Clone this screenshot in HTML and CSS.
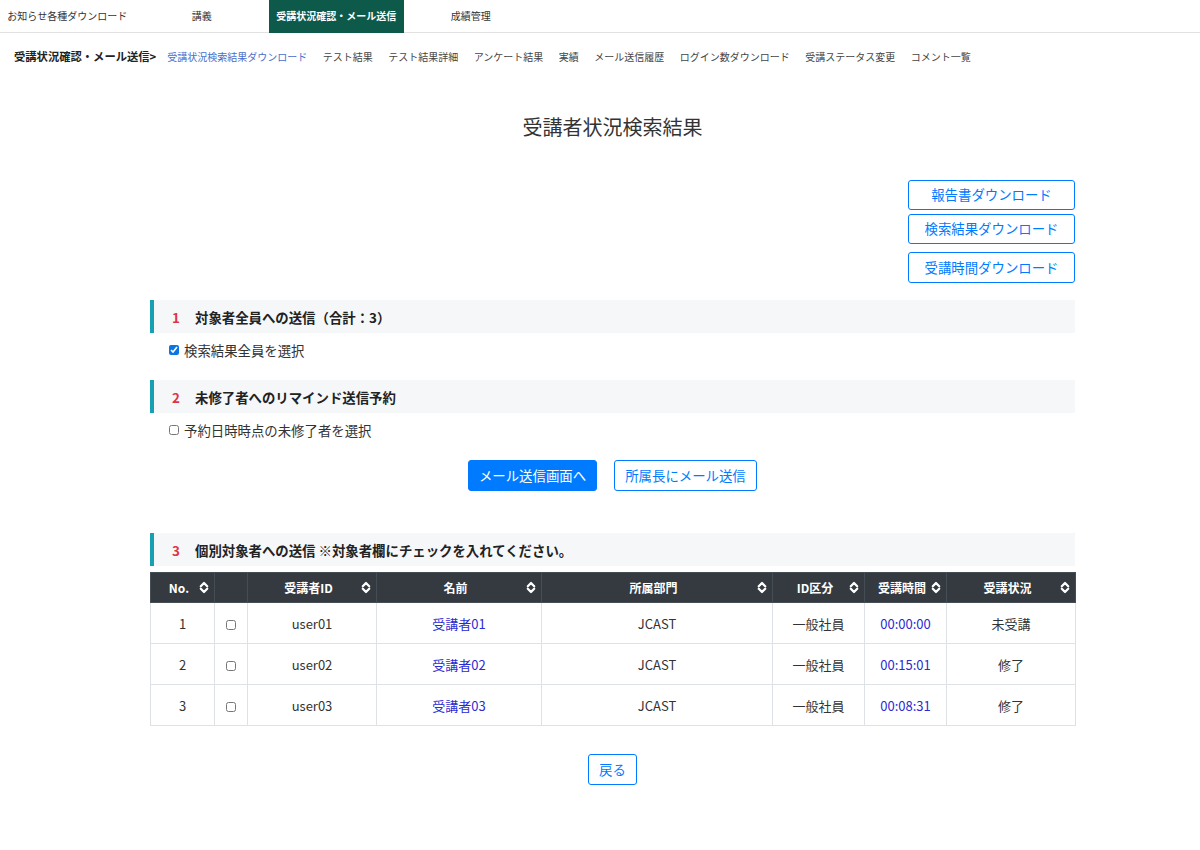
FILE: index.html
```html
<!DOCTYPE html>
<html lang="ja">
<head>
<meta charset="utf-8">
<title>受講者状況検索結果</title>
<link rel="stylesheet" href="styles.css">
</head>
<body>
<nav class="topnav">
  <a href="#">お知らせ各種ダウンロード</a>
  <a href="#">講義</a>
  <a href="#" class="active">受講状況確認・メール送信</a>
  <a href="#">成績管理</a>
</nav>
<div class="subnav">
  <span class="crumb-title">受講状況確認・メール送信&gt;</span>
  <a href="#" class="current">受講状況検索結果ダウンロード</a>
  <a href="#">テスト結果</a>
  <a href="#">テスト結果詳細</a>
  <a href="#">アンケート結果</a>
  <a href="#">実績</a>
  <a href="#">メール送信履歴</a>
  <a href="#">ログイン数ダウンロード</a>
  <a href="#">受講ステータス変更</a>
  <a href="#">コメント一覧</a>
</div>
<main class="main">
  <h1 class="title">受講者状況検索結果</h1>
  <div class="dl-buttons">
    <button class="btn btn-outline dl">報告書ダウンロード</button>
    <button class="btn btn-outline dl dl2">検索結果ダウンロード</button>
    <button class="btn btn-outline dl dl3">受講時間ダウンロード</button>
  </div>

  <div class="sec-head sec1"><span class="num">1</span><span>対象者全員への送信（合計：3）</span></div>
  <label class="check-row"><input type="checkbox" checked><span>検索結果全員を選択</span></label>

  <div class="sec-head sec2"><span class="num">2</span><span>未修了者へのリマインド送信予約</span></div>
  <label class="check-row"><input type="checkbox"><span>予約日時時点の未修了者を選択</span></label>

  <div class="mail-buttons">
    <button class="btn btn-primary">メール送信画面へ</button>
    <button class="btn btn-outline">所属長にメール送信</button>
  </div>

  <div class="sec-head sec3"><span class="num">3</span><span>個別対象者への送信 ※対象者欄にチェックを入れてください。</span></div>

  <table class="tbl">
    <colgroup>
      <col style="width:64px"><col style="width:33px"><col style="width:129px"><col style="width:165px">
      <col style="width:231px"><col style="width:92px"><col style="width:82px"><col style="width:129px">
    </colgroup>
    <thead>
      <tr>
        <th><div class="th"><span>No.</span><svg class="sort" width="10" height="13" viewBox="0 0 10 13"><path d="M1.8 5.2 L5 2 L8.2 5.2 M1.8 7.8 L5 11 L8.2 7.8"/></svg></div></th>
        <th></th>
        <th><div class="th"><span>受講者ID</span><svg class="sort" width="10" height="13" viewBox="0 0 10 13"><path d="M1.8 5.2 L5 2 L8.2 5.2 M1.8 7.8 L5 11 L8.2 7.8"/></svg></div></th>
        <th><div class="th"><span>名前</span><svg class="sort" width="10" height="13" viewBox="0 0 10 13"><path d="M1.8 5.2 L5 2 L8.2 5.2 M1.8 7.8 L5 11 L8.2 7.8"/></svg></div></th>
        <th><div class="th"><span>所属部門</span><svg class="sort" width="10" height="13" viewBox="0 0 10 13"><path d="M1.8 5.2 L5 2 L8.2 5.2 M1.8 7.8 L5 11 L8.2 7.8"/></svg></div></th>
        <th><div class="th"><span>ID区分</span><svg class="sort" width="10" height="13" viewBox="0 0 10 13"><path d="M1.8 5.2 L5 2 L8.2 5.2 M1.8 7.8 L5 11 L8.2 7.8"/></svg></div></th>
        <th><div class="th"><span>受講時間</span><svg class="sort" width="10" height="13" viewBox="0 0 10 13"><path d="M1.8 5.2 L5 2 L8.2 5.2 M1.8 7.8 L5 11 L8.2 7.8"/></svg></div></th>
        <th><div class="th"><span>受講状況</span><svg class="sort" width="10" height="13" viewBox="0 0 10 13"><path d="M1.8 5.2 L5 2 L8.2 5.2 M1.8 7.8 L5 11 L8.2 7.8"/></svg></div></th>
      </tr>
    </thead>
    <tbody>
      <tr>
        <td>1</td><td><input type="checkbox"></td><td>user01</td><td><a href="#" class="link">受講者01</a></td>
        <td>JCAST</td><td>一般社員</td><td class="link">00:00:00</td><td>未受講</td>
      </tr>
      <tr>
        <td>2</td><td><input type="checkbox"></td><td>user02</td><td><a href="#" class="link">受講者02</a></td>
        <td>JCAST</td><td>一般社員</td><td class="link">00:15:01</td><td>修了</td>
      </tr>
      <tr>
        <td>3</td><td><input type="checkbox"></td><td>user03</td><td><a href="#" class="link">受講者03</a></td>
        <td>JCAST</td><td>一般社員</td><td class="link">00:08:31</td><td>修了</td>
      </tr>
    </tbody>
  </table>

  <div class="back-wrap"><button class="btn btn-outline back">戻る</button></div>
</main>
</body>
</html>
```

FILE: styles.css
```css
* { box-sizing: border-box; }
body {
  margin: 0;
  font-family: "Noto Sans CJK JP", "Noto Sans", sans-serif;
  color: #333;
  background: #fff;
}
.topnav {
  display: flex;
  height: 33px;
  border-bottom: 1px solid #e2e2e2;
}
.topnav a {
  width: 134.5px;
  height: 32px;
  text-align: center;
  line-height: 32px;
  font-size: 10px;
  color: #333;
  text-decoration: none;
}
.topnav a.active {
  background: #0e5a4a;
  color: #fff;
  font-weight: bold;
  height: 33px;
}
.subnav {
  display: flex;
  align-items: center;
  height: 16px;
  margin-top: 15px;
  padding-left: 14px;
}
.crumb-title {
  font-size: 11.3px;
  font-weight: bold;
  color: #222;
  margin-right: 11px;
}
.subnav a {
  font-size: 10px;
  color: #444;
  text-decoration: none;
  margin-right: 15.5px;
  white-space: nowrap;
}
.subnav a.current { color: #4a6ecb; }

.main {
  width: 925px;
  margin-left: 150px;
}
.title {
  margin: 49px 0 0;
  height: 28px;
  line-height: 28px;
  font-size: 20px;
  font-weight: normal;
  text-align: center;
  color: #333;
}
.btn {
  font-family: inherit;
  font-size: 13.4px;
  border-radius: 3px;
  border: 1px solid #007bff;
  background: #fff;
  color: #007bff;
  height: 31px;
  padding: 0;
  cursor: pointer;
  line-height: 1;
  white-space: nowrap;
}
.btn-primary {
  background: #007bff;
  color: #fff;
}
.dl-buttons {
  display: flex;
  flex-direction: column;
  align-items: flex-end;
  margin-top: 39px;
}
.dl { width: 167px; height: 30px; }
.dl2 { margin-top: 4px; }
.dl3 { margin-top: 8px; height: 31px; }

.sec-head {
  display: flex;
  align-items: center;
  height: 33px;
  background: #f6f7f9;
  border-left: 4px solid #179fb2;
  padding-left: 18px;
  font-size: 13.4px;
  font-weight: bold;
  color: #222;
}
.sec-head .num {
  width: 23px;
  color: #dc3545;
}
.sec1 { margin-top: 17px; }
.sec2 { margin-top: 20px; }
.sec3 { margin-top: 42px; }

.check-row {
  display: flex;
  align-items: center;
  height: 20px;
  margin-top: 7px;
  padding-left: 19px;
  font-size: 13.4px;
  color: #333;
}
input[type="checkbox"] {
  width: 10px;
  height: 10px;
  margin: 0;
  accent-color: #0b74e5;
}
.check-row input { margin-right: 5px; }

.mail-buttons {
  display: flex;
  justify-content: center;
  gap: 17px;
  margin-top: 20px;
}
.mail-buttons .btn-primary { width: 129px; }
.mail-buttons .btn-outline { width: 143px; }

.tbl {
  width: 925px;
  margin-top: 6px;
  border-collapse: collapse;
  table-layout: fixed;
  font-size: 13px;
}
.tbl th {
  height: 30px;
  background: #343a40;
  color: #fff;
  font-size: 12px;
  font-weight: bold;
  border: 1px solid #454d55;
  padding: 0 5px 0 8px;
}
.th {
  display: flex;
  align-items: center;
}
.th span {
  flex: 1;
  text-align: center;
}
.sort path {
  fill: none;
  stroke: #fff;
  stroke-width: 2.3;
  stroke-linecap: round;
  stroke-linejoin: round;
}
.tbl td {
  height: 41px;
  border: 1px solid #dee2e6;
  text-align: center;
  vertical-align: middle;
  color: #333;
  padding: 0 4px;
}
.tbl td input { vertical-align: -1px; }
.link {
  color: #2b2bd3;
  text-decoration: none;
}
td.link { color: #2b2bd3; }

.back-wrap {
  display: flex;
  justify-content: center;
  margin-top: 28px;
}
.back { width: 49px; }
```
